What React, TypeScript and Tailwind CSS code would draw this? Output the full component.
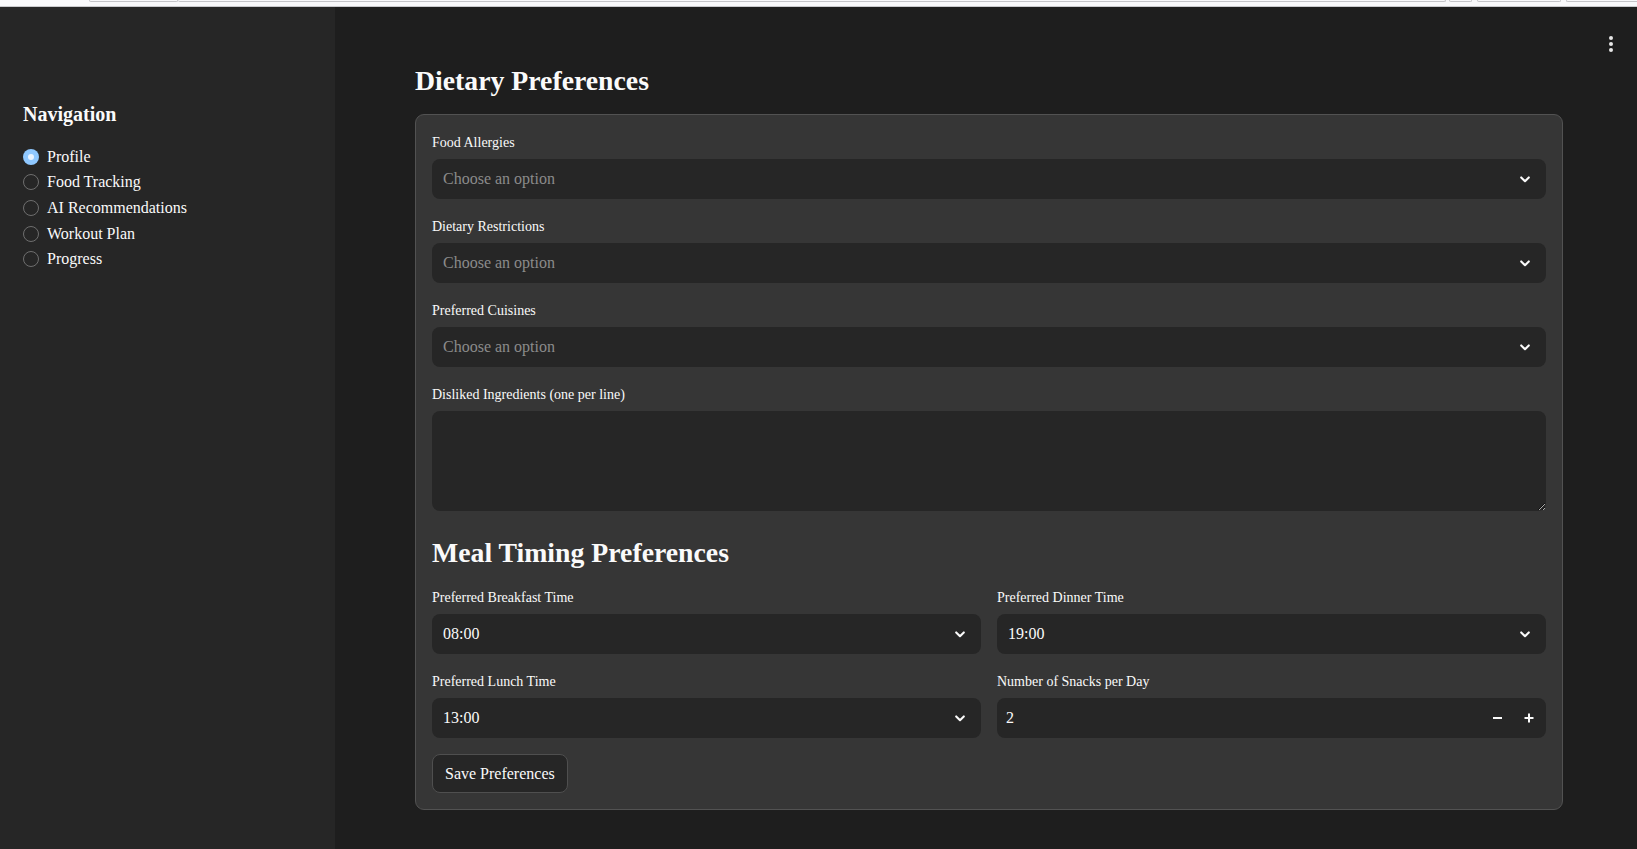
import { useState } from 'react'

const serif = { fontFamily: '"Liberation Serif", "Times New Roman", serif' }

const navItems = ['Profile', 'Food Tracking', 'AI Recommendations', 'Workout Plan', 'Progress']

function Chevron() {
  return (
    <svg width="10" height="7" viewBox="0 0 10 7" fill="none">
      <path d="M1.2 1.4 L5 5.2 L8.8 1.4" stroke="#fafafa" strokeWidth="2.1" strokeLinecap="round" strokeLinejoin="round" />
    </svg>
  )
}

function Field({ label, children }: { label: string; children: React.ReactNode }) {
  return (
    <div className="flex flex-col">
      <div className="text-[14px] leading-[24px] mb-[4px] text-[#fafafa]">{label}</div>
      {children}
    </div>
  )
}

function SelectBox({ value, placeholder }: { value?: string; placeholder?: string }) {
  return (
    <div className="h-10 rounded-lg bg-[#262626] flex items-center justify-between pl-[11px] pr-4">
      {value ? (
        <span className="text-[16px] text-[#fafafa]">{value}</span>
      ) : (
        <span className="text-[16px] text-[#8b8b8b]">{placeholder}</span>
      )}
      <Chevron />
    </div>
  )
}

export default function App() {
  const [page, setPage] = useState('Profile')
  const [snacks, setSnacks] = useState(2)

  return (
    <div className="h-[849px] w-full flex flex-col bg-[#1e1e1e] overflow-hidden" style={serif}>
      {/* bottom edge of the browser chrome */}
      <div className="h-[7px] shrink-0 bg-[#f8f8fa] border-b border-[#c9c9cc] flex items-start">
        <div className="w-[89px]" />
        <div className="w-[89px] h-[2px] border-b border-x border-[#c4c4c8] rounded-b-[4px]" />
        <div className="w-[1268px] h-[2px] border-b border-r border-[#c4c4c8] rounded-b-[4px]" />
        <div className="w-[23px] ml-[3px] h-[2px] border-b border-x border-[#c4c4c8] rounded-b-[4px]" />
        <div className="w-[84px] ml-[5px] h-[2px] border-b border-x border-[#c4c4c8] rounded-b-[4px]" />
        <div className="flex-1 ml-[5px] h-[2px] border-b border-l border-[#c4c4c8] rounded-bl-[4px]" />
      </div>

      <div className="flex flex-1 min-h-0">
        <aside className="w-[335px] shrink-0 bg-[#262626] pl-[23px] pt-[95px]">
          <h3 className="text-[20px] leading-[24px] font-bold text-[#fafafa]">Navigation</h3>
          <div className="mt-[18px] flex flex-col">
            {navItems.map((item) => {
              const active = item === page
              return (
                <button
                  key={item}
                  onClick={() => setPage(item)}
                  className="h-[25.6px] flex items-center gap-2 text-left"
                >
                  {active ? (
                    <span className="w-4 h-4 rounded-full bg-[#8fc8ff] flex items-center justify-center">
                      <span className="w-[6px] h-[6px] rounded-full bg-[#e8f3ff]" />
                    </span>
                  ) : (
                    <span className="w-4 h-4 rounded-full border-[1.5px] border-[#6e6e6e]" />
                  )}
                  <span className="text-[16px] text-[#fafafa] leading-none">{item}</span>
                </button>
              )
            })}
          </div>
        </aside>

        <main className="relative flex-1 pl-20 pr-[74px] pt-[57px]">
          <div className="absolute right-[24px] top-[29px] flex flex-col gap-[2px]">
            <span className="w-1 h-1 rounded-full bg-[#e6e6e6]" />
            <span className="w-1 h-1 rounded-full bg-[#e6e6e6]" />
            <span className="w-1 h-1 rounded-full bg-[#e6e6e6]" />
          </div>

          <h2 className="text-[27.75px] leading-[34px] font-bold text-[#fafafa] mb-4">Dietary Preferences</h2>

          <div className="border border-[#525252] rounded-[9px] bg-[#363636] p-4 flex flex-col gap-4">
            <Field label="Food Allergies">
              <SelectBox placeholder="Choose an option" />
            </Field>
            <Field label="Dietary Restrictions">
              <SelectBox placeholder="Choose an option" />
            </Field>
            <Field label="Preferred Cuisines">
              <SelectBox placeholder="Choose an option" />
            </Field>
            <Field label="Disliked Ingredients (one per line)">
              <textarea className="h-[100px] rounded-lg bg-[#262626] text-[#fafafa] text-[16px] px-[11px] py-2 outline-none resize-y [color-scheme:dark]" />
            </Field>

            <h2 className="pt-[9px] text-[27.75px] leading-[34px] font-bold text-[#fafafa]">Meal Timing Preferences</h2>

            <div className="grid grid-cols-2 gap-x-4 gap-y-4">
              <Field label="Preferred Breakfast Time">
                <SelectBox value="08:00" />
              </Field>
              <Field label="Preferred Dinner Time">
                <SelectBox value="19:00" />
              </Field>
              <Field label="Preferred Lunch Time">
                <SelectBox value="13:00" />
              </Field>
              <Field label="Number of Snacks per Day">
                <div className="h-10 rounded-lg bg-[#262626] flex items-center pl-[9px] pr-[1px]">
                  <span className="flex-1 text-[16px] text-[#fafafa]">{snacks}</span>
                  <button onClick={() => setSnacks(Math.max(0, snacks - 1))} className="w-8 h-10 flex items-center justify-center">
                    <span className="w-[9px] h-[2px] bg-[#fafafa]" />
                  </button>
                  <button onClick={() => setSnacks(snacks + 1)} className="w-8 h-10 flex items-center justify-center">
                    <svg width="10" height="10" viewBox="0 0 10 10">
                      <path d="M5 0.5 V9.5 M0.5 5 H9.5" stroke="#fafafa" strokeWidth="2" />
                    </svg>
                  </button>
                </div>
              </Field>
            </div>

            <button className="w-fit h-[39px] px-[12px] rounded-lg border border-[#4f4f4f] bg-[#262626] text-[16px] text-[#fafafa]">
              Save Preferences
            </button>
          </div>
        </main>
      </div>
    </div>
  )
}
